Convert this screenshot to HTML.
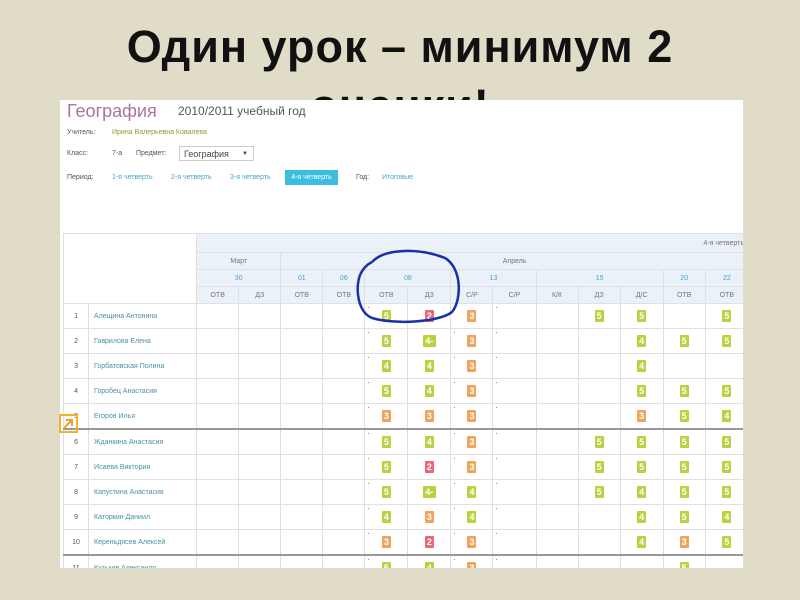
<!DOCTYPE html>
<html><head><meta charset="utf-8"><style>
body{margin:0;width:800px;height:600px;background:#e1dcc8;position:relative;overflow:hidden;font-family:"Liberation Sans",sans-serif}
.t{position:absolute;left:0;width:800px;text-align:center;font-weight:bold;font-size:45px;color:#111;letter-spacing:1px}
#img{position:absolute;left:60px;top:100px;width:683px;height:468px;background:#fff;overflow:hidden}
.a{position:absolute;white-space:nowrap}
table{position:absolute;left:3px;top:133px;border-collapse:collapse;table-layout:fixed;width:686px}
td{border:1px solid #e0e0e0;font-size:7px;color:#777;text-align:center;padding:0;position:relative;overflow:hidden}
tr.h td{background:#eaf1f8}
tr.h1 td{height:18px}
tr.h2 td,tr.h3 td,tr.h4 td{height:16px}
tr.h3 td{color:#4aa3c8;font-size:7px}
tr.d td{height:24px}
tr.b td{border-bottom:2px solid #999}
td.n{color:#555}
td.nm{text-align:left;padding-left:5px;color:#4a90a8;font-size:7px}
i{display:inline-block;width:9px;height:12px;line-height:12px;font-style:normal;font-weight:bold;color:#fff;font-size:9px;border-radius:1px}
i.g{background:#bcd040}i.o{background:#f0a35a}i.r{background:#ec6878}
i.w{width:13px}
.dt:before{content:"";position:absolute;left:3px;top:3px;width:1px;height:1px;background:#e66}
</style></head><body>
<div class="t" style="top:21px">Один урок – минимум 2</div>
<div class="t" style="top:80px">оценки!</div>
<div id="img">
<div class="a" style="left:7px;top:1px;font-size:18px;color:#a9759e">География</div>
<div class="a" style="left:118px;top:4px;font-size:12px;color:#555">2010/2011 учебный год</div>
<div class="a" style="left:7px;top:29px;font-size:7px;color:#555">Учитель:</div>
<div class="a" style="left:52px;top:29px;font-size:7px;color:#8aa030">Ирина Валерьевна Ковалева</div>
<div class="a" style="left:7px;top:50px;font-size:7px;color:#555">Класс:</div>
<div class="a" style="left:52px;top:50px;font-size:7px;color:#555">7-а</div>
<div class="a" style="left:76px;top:50px;font-size:7px;color:#555">Предмет:</div>
<div class="a" style="left:119px;top:46px;width:75px;height:15px;border:1px solid #ccc;font-size:9px;color:#444;line-height:15px;padding-left:4px;box-sizing:border-box">География<span style="position:absolute;right:5px;font-size:6px">▼</span></div>
<div class="a" style="left:7px;top:74px;font-size:7px;color:#555">Период:</div>
<div class="a" style="left:52px;top:74px;font-size:7px;color:#4aa3c8">1-я четверть</div>
<div class="a" style="left:111px;top:74px;font-size:7px;color:#4aa3c8">2-я четверть</div>
<div class="a" style="left:170px;top:74px;font-size:7px;color:#4aa3c8">3-я четверть</div>
<div class="a" style="left:225px;top:70px;width:53px;height:15px;background:#3cbde0;font-size:7px;color:#fff;line-height:15px;text-align:center">4-я четверть</div>
<div class="a" style="left:296px;top:74px;font-size:7px;color:#555">Год:</div>
<div class="a" style="left:322px;top:74px;font-size:7px;color:#4aa3c8">Итоговые</div>
<table>
<colgroup><col style="width:25px"><col style="width:108px"><col style="width:42px"><col style="width:42px"><col style="width:42px"><col style="width:42px"><col style="width:43px"><col style="width:43px"><col style="width:42px"><col style="width:43px"><col style="width:42px"><col style="width:42px"><col style="width:43px"><col style="width:42px"><col style="width:43px"></colgroup>
<tr class="h h1"><td rowspan="4" colspan="2" style="background:#fff"></td><td colspan="13" style="text-align:right;padding-right:4px">4-я четверть</td></tr>
<tr class="h h2"><td colspan="2">Март</td><td colspan="11">Апрель</td></tr>
<tr class="h h3"><td colspan="2">30</td><td>01</td><td>06</td><td colspan="2">08</td><td colspan="2">13</td><td colspan="3">15</td><td>20</td><td>22</td></tr>
<tr class="h h4"><td>ОТВ</td><td>ДЗ</td><td>ОТВ</td><td>ОТВ</td><td>ОТВ</td><td>ДЗ</td><td>С/Р</td><td>С/Р</td><td>К/К</td><td>ДЗ</td><td>Д/С</td><td>ОТВ</td><td>ОТВ</td></tr>
<tr class="d"><td class="n">1</td><td class="nm">Алещина Антонина</td><td></td><td></td><td></td><td></td><td class="dt"><i class="g">5</i></td><td><i class="r">2</i></td><td class="dt"><i class="o">3</i></td><td class="dt"></td><td></td><td><i class="g">5</i></td><td><i class="g">5</i></td><td></td><td><i class="g">5</i></td></tr>
<tr class="d"><td class="n">2</td><td class="nm">Гаврилова Елена</td><td></td><td></td><td></td><td></td><td class="dt"><i class="g">5</i></td><td><i class="g w">4-</i></td><td class="dt"><i class="o">3</i></td><td class="dt"></td><td></td><td></td><td><i class="g">4</i></td><td><i class="g">5</i></td><td><i class="g">5</i></td></tr>
<tr class="d"><td class="n">3</td><td class="nm">Горбатовская Полина</td><td></td><td></td><td></td><td></td><td class="dt"><i class="g">4</i></td><td><i class="g">4</i></td><td class="dt"><i class="o">3</i></td><td class="dt"></td><td></td><td></td><td><i class="g">4</i></td><td></td><td></td></tr>
<tr class="d"><td class="n">4</td><td class="nm">Горобец Анастасия</td><td></td><td></td><td></td><td></td><td class="dt"><i class="g">5</i></td><td><i class="g">4</i></td><td class="dt"><i class="o">3</i></td><td class="dt"></td><td></td><td></td><td><i class="g">5</i></td><td><i class="g">5</i></td><td><i class="g">5</i></td></tr>
<tr class="d b"><td class="n">5</td><td class="nm">Егоров Илья</td><td></td><td></td><td></td><td></td><td class="dt"><i class="o">3</i></td><td><i class="o">3</i></td><td class="dt"><i class="o">3</i></td><td class="dt"></td><td></td><td></td><td><i class="o">3</i></td><td><i class="g">5</i></td><td><i class="g">4</i></td></tr>
<tr class="d"><td class="n">6</td><td class="nm">Жданкина Анастасия</td><td></td><td></td><td></td><td></td><td class="dt"><i class="g">5</i></td><td><i class="g">4</i></td><td class="dt"><i class="o">3</i></td><td class="dt"></td><td></td><td><i class="g">5</i></td><td><i class="g">5</i></td><td><i class="g">5</i></td><td><i class="g">5</i></td></tr>
<tr class="d"><td class="n">7</td><td class="nm">Исаева Виктория</td><td></td><td></td><td></td><td></td><td class="dt"><i class="g">5</i></td><td><i class="r">2</i></td><td class="dt"><i class="o">3</i></td><td class="dt"></td><td></td><td><i class="g">5</i></td><td><i class="g">5</i></td><td><i class="g">5</i></td><td><i class="g">5</i></td></tr>
<tr class="d"><td class="n">8</td><td class="nm">Капустина Анастасия</td><td></td><td></td><td></td><td></td><td class="dt"><i class="g">5</i></td><td><i class="g w">4-</i></td><td class="dt"><i class="g">4</i></td><td class="dt"></td><td></td><td><i class="g">5</i></td><td><i class="g">4</i></td><td><i class="g">5</i></td><td><i class="g">5</i></td></tr>
<tr class="d"><td class="n">9</td><td class="nm">Каторкин Даниил</td><td></td><td></td><td></td><td></td><td class="dt"><i class="g">4</i></td><td><i class="o">3</i></td><td class="dt"><i class="g">4</i></td><td class="dt"></td><td></td><td></td><td><i class="g">4</i></td><td><i class="g">5</i></td><td><i class="g">4</i></td></tr>
<tr class="d b"><td class="n">10</td><td class="nm">Кереньдясев Алексей</td><td></td><td></td><td></td><td></td><td class="dt"><i class="o">3</i></td><td><i class="r">2</i></td><td class="dt"><i class="o">3</i></td><td class="dt"></td><td></td><td></td><td><i class="g">4</i></td><td><i class="o">3</i></td><td><i class="g">5</i></td></tr>
<tr class="d"><td class="n">11</td><td class="nm">Кузькив Александр</td><td></td><td></td><td></td><td></td><td class="dt"><i class="g">5</i></td><td><i class="g">4</i></td><td class="dt"><i class="o">3</i></td><td class="dt"></td><td></td><td></td><td></td><td><i class="g">5</i></td><td></td></tr>
</table>
</div>
<svg style="position:absolute;left:0;top:0" width="800" height="600"><path d="M372 262 C385 248 420 248 445 258 C462 268 462 300 452 312 C440 322 395 325 372 318 C358 312 355 290 360 275 C363 268 368 264 372 262" fill="none" stroke="#1b2fa8" stroke-width="2.5"/>
<rect x="60" y="415" width="17" height="17" fill="none" stroke="#f0b030" stroke-width="2"/><path d="M64 428 L72 420 M66 420 L72 420 L72 426" stroke="#f0a020" stroke-width="2" fill="none"/></svg>
</body></html>
